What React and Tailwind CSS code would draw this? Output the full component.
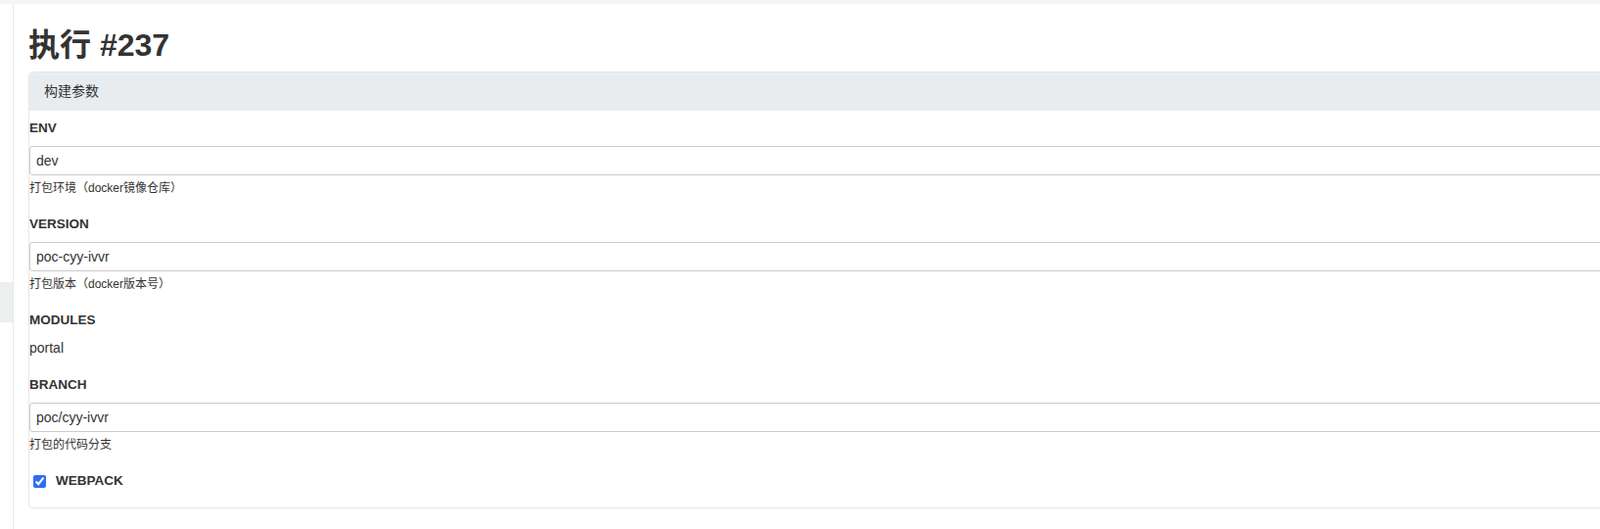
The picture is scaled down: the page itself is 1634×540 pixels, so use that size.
const fields = [
  { name: "ENV", value: "dev", help: "打包环境（docker镜像仓库）" },
  { name: "VERSION", value: "poc-cyy-ivvr", help: "打包版本（docker版本号）" },
];

const labelCls = "text-[13.5px] font-semibold leading-5";

function TextField({ name, value, help }) {
  return (
    <div className="mb-[18px]">
      <div className={labelCls + " mb-2"}>{name}</div>
      <input
        type="text"
        defaultValue={value}
        className="block w-full h-[30px] px-[6px] text-[14px] text-[#333] bg-white border border-[#ccc] rounded-[3px] focus:outline-none"
      />
      <div className="mt-1 text-[12px] leading-[18px]">{help}</div>
    </div>
  );
}

export default function App() {
  return (
    <div
      className="w-screen h-[540px] overflow-hidden bg-white text-[#333]"
      style={{ fontFamily: '"Liberation Sans", "Noto Sans CJK SC", sans-serif' }}
    >
      <div className="h-[4px] bg-[#f5f5f5]" />
      <div className="flex h-[536px]">
        <aside className="w-[14px] shrink-0 border-r border-[#e8e8e8] pt-[284px]">
          <div className="h-[41px] bg-[#eceef0]" />
        </aside>

        <main className="pl-[15px] w-[1700px] shrink-0">
          <h1 className="pt-[24px] mb-[9px] text-[32px] font-bold leading-[36px] text-[#333]">
            执行 #237
          </h1>

          <div className="border border-[#e6e6e6] rounded-[4px] overflow-hidden">
            <div className="h-[39px] flex items-center px-[15px] bg-[#e9ecef] text-[14px]">
              构建参数
            </div>

            <div className="pt-2 pb-[17px]">
              {fields.map((f) => (
                <TextField key={f.name} {...f} />
              ))}

              <div className="mb-[18px]">
                <div className={labelCls + " mb-2"}>MODULES</div>
                <div className="text-[14px] leading-5">portal</div>
              </div>

              <TextField name="BRANCH" value="poc/cyy-ivvr" help="打包的代码分支" />

              <label className="flex items-center h-5 pl-[4px]">
                <input
                  type="checkbox"
                  defaultChecked
                  className="w-[13px] h-[13px] m-0 accent-[#2f6df5]"
                />
                <span className={labelCls + " ml-[10px]"}>WEBPACK</span>
              </label>
            </div>
          </div>
        </main>
      </div>
    </div>
  );
}
